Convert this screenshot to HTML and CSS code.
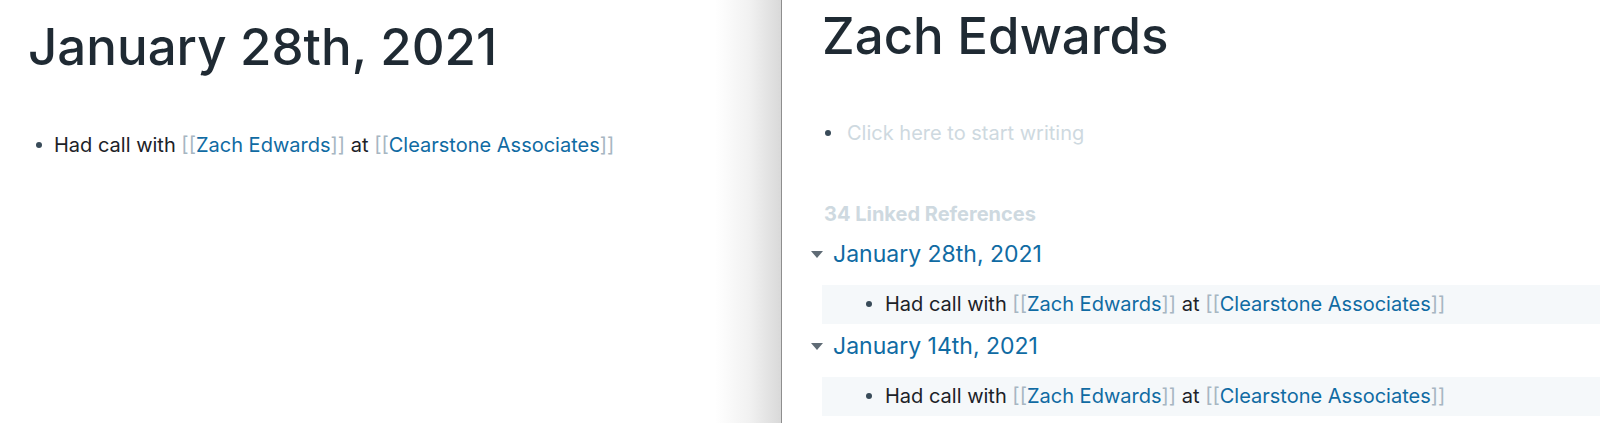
FILE: index.html
```html
<!DOCTYPE html>
<html lang="en">
<head>
<meta charset="utf-8">
<title>Zach Edwards</title>
<link rel="stylesheet" href="styles.css">
</head>
<body>
<div class="app">
  <section class="pane pane-left">
    <h1 class="title">January 28th, 2021</h1>
    <div class="block block-main">
      <span class="bullet"></span>
      <span class="text">Had call with <span class="br">[[</span><span class="link">Zach Edwards</span><span class="br">]]</span> at <span class="br">[[</span><span class="link">Clearstone Associates</span><span class="br">]]</span></span>
    </div>
  </section>
  <section class="pane pane-right">
    <h1 class="title title-right">Zach Edwards</h1>
    <div class="block block-placeholder">
      <span class="bullet"></span>
      <span class="text placeholder">Click here to start writing</span>
    </div>
    <div class="refs-header">34 Linked References</div>
    <div class="refs">
      <div class="ref">
        <div class="ref-title"><span class="caret"></span><span class="ref-link">January 28th, 2021</span></div>
        <div class="ref-body">
          <div class="block block-ref">
            <span class="bullet"></span>
            <span class="text">Had call with <span class="br">[[</span><span class="link">Zach Edwards</span><span class="br">]]</span> at <span class="br">[[</span><span class="link">Clearstone Associates</span><span class="br">]]</span></span>
          </div>
        </div>
      </div>
      <div class="ref">
        <div class="ref-title"><span class="caret"></span><span class="ref-link">January 14th, 2021</span></div>
        <div class="ref-body">
          <div class="block block-ref">
            <span class="bullet"></span>
            <span class="text">Had call with <span class="br">[[</span><span class="link">Zach Edwards</span><span class="br">]]</span> at <span class="br">[[</span><span class="link">Clearstone Associates</span><span class="br">]]</span></span>
          </div>
        </div>
      </div>
    </div>
  </section>
</div>
</body>
</html>
```

FILE: styles.css
```css
* { box-sizing: border-box; }

html, body {
  margin: 0;
  padding: 0;
  background: #ffffff;
}

body {
  font-family: Inter, "Noto Sans", "Liberation Sans", sans-serif;
  color: #1c2228;
  width: 1600px;
  height: 423px;
  overflow: hidden;
}

.app {
  display: flex;
  height: 423px;
}

.pane-left {
  width: 782px;
  flex: none;
  padding: 17px 0 0 28px;
  background: linear-gradient(90deg, #ffffff 0, #ffffff 715px, #f1f1f1 750px, #d9d9d9 781px);
  border-right: 1px solid #8e8e8e;
}

.pane-right {
  flex: 1;
  padding: 6px 0 0 40px;
  background: #ffffff;
}

.title {
  margin: 0;
  font-size: 51px;
  line-height: 60px;
  font-weight: 500;
  color: #1f2a33;
  letter-spacing: 0;
}

.block {
  display: flex;
  align-items: center;
  gap: 12px;
  font-size: 20px;
  line-height: 28px;
}

.bullet {
  width: 6px;
  height: 6px;
  border-radius: 50%;
  background: #394b59;
  flex: none;
}

.block-main {
  margin-top: 54px;
  padding-left: 8px;
}

.block-placeholder {
  margin-top: 53px;
  padding-left: 3px;
  gap: 16px;
}

.placeholder { color: #ced9e0; }

.br { color: #a7b6c2; }
.link { color: #106ba3; }

.refs-header {
  margin-top: 55px;
  font-size: 20px;
  line-height: 24px;
  font-weight: 700;
  color: #ced9e0;
  padding-left: 2px;
}

.refs {
  display: flex;
  flex-direction: column;
  gap: 6px;
  margin-top: 12px;
}

.ref-title {
  display: flex;
  align-items: center;
  gap: 10px;
  margin-left: -9px;
  font-size: 23px;
  line-height: 32px;
  color: #106ba3;
}

.caret {
  width: 0;
  height: 0;
  border-left: 6px solid transparent;
  border-right: 6px solid transparent;
  border-top: 7px solid #5f6b75;
  flex: none;
  margin-left: -2px;
}

.ref-body {
  margin-top: 15px;
  background: #f5f8fa;
  padding: 5px 0 6px 44px;
}

.block-ref { gap: 13px; }
```
